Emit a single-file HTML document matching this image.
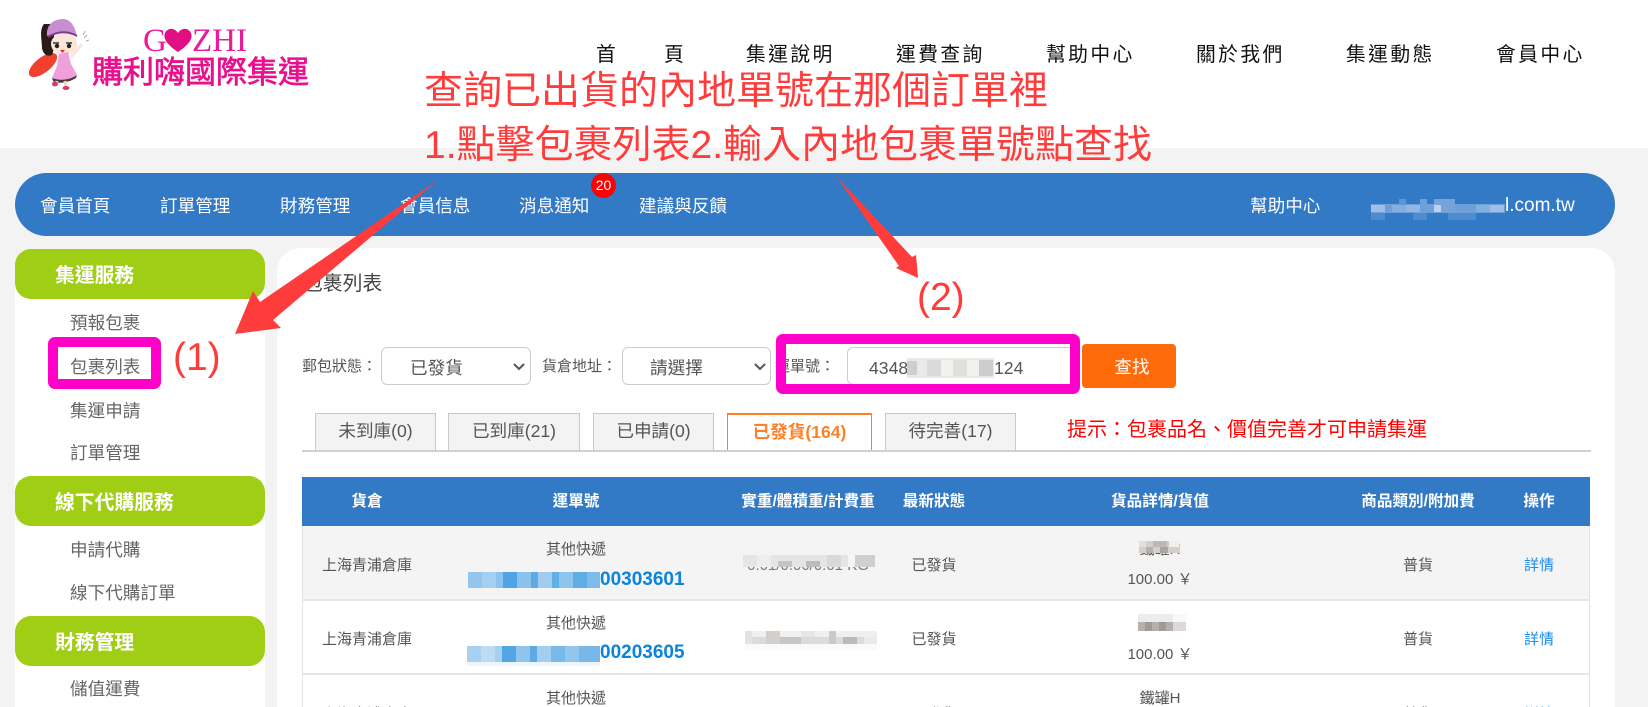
<!DOCTYPE html>
<html lang="zh-Hant"><head><meta charset="utf-8"><title>包裹列表</title>
<style>
html,body{margin:0;padding:0;width:1648px;height:707px;overflow:hidden}
body{background:#f3f3f3;font-family:"Liberation Sans","Noto Sans CJK TC",sans-serif;color:#555}
#p{position:relative;width:1648px;height:707px;overflow:hidden;background:#f3f3f3}
div,span{box-sizing:border-box}
.a{position:absolute}
.t{position:absolute;line-height:30px;height:30px;white-space:nowrap}
.c{text-align:center;width:240px}
.nav{font-size:19.8px;letter-spacing:2.4px;color:#111}
.m{font-size:17.6px;color:#fff}
.h{left:15px;width:250px;height:50px;background:#9fce14;border-radius:16px}
.hh{font-size:19.8px;font-weight:700;color:#fff;left:55px}
.s{font-size:17.6px;color:#666;left:70px}
.tab{position:absolute;top:413px;height:38px;background:#f3f3f3;border:1px solid #c8c8c8;border-bottom:none;font-size:17.6px;line-height:35px;text-align:center;color:#555;white-space:nowrap}
.sel{position:absolute;top:347px;height:38px;background:#fff;border:1px solid #ccc;border-radius:6px}
.l{font-size:15px;color:#555}
.th{font-size:15.6px;font-weight:700;color:#fff}
.td{font-size:15px;color:#555}
.no{font-size:19px;font-weight:700;color:#0a84dc;left:600px}
.lnk{font-size:15px;color:#1a8ceb}
.red{color:#ff3c3c;font-size:39px;line-height:46px;height:46px;position:absolute;white-space:nowrap}
.pk{position:absolute;border-style:solid;border-color:#ff00c8;border-radius:7px}
</style></head><body><div id="p">

<!-- header -->
<div class="a" style="left:0;top:0;width:1648px;height:148px;background:#fff"></div>

<!-- logo girl -->
<svg class="a" style="left:0;top:0" width="320" height="100" viewBox="0 0 320 100">
<ellipse cx="43" cy="65" rx="17" ry="7.5" transform="rotate(-38 43 65)" fill="#f2402e"/>
<path d="M44 24 C39 30 42 40 42 48 C43 54 47 57 52 55 C56 46 54 30 52 24Z" fill="#2a1a18"/>
<ellipse cx="64" cy="44" rx="13" ry="11" fill="#fbe6d8"/>
<path d="M47 36 C46 24 54 19 64 19 C72 20 75 28 77 36 C68 31 57 32 47 36Z" fill="#c98ed0"/>
<path d="M48 37 C58 31 68 31 77 36" stroke="#7d3f8c" stroke-width="2" fill="none"/>
<path d="M53 43 h6 M66 43 h6" stroke="#333" stroke-width="1.5"/>
<circle cx="57" cy="46" r="2.2" fill="#222"/><circle cx="69" cy="46" r="2.2" fill="#222"/>
<path d="M60 50h5l-2.5 3z" fill="#d03040"/>
<path d="M71 57 L82 44" stroke="#fbe6d8" stroke-width="3"/>
<path d="M84 38 l3 -3 M83 35 l2 -4 M86 41 l3 -1" stroke="#aaa" stroke-width="1"/>
<path d="M59 54 L68 52 L71 64 L77 75 C70 80 60 81 52 78 L57 66Z" fill="#efa0da"/>
<path d="M52 78 C60 81 70 80 77 75 L76 78 C68 83 58 84 53 81Z" fill="#4a3a3a"/>
<path d="M57 81 L56 85 M65 81 L66 88" stroke="#f5d5c5" stroke-width="3"/>
<ellipse cx="55" cy="84" rx="3" ry="2.5" fill="#d83a70"/><ellipse cx="66" cy="88" rx="3.5" ry="2" fill="#d83a70"/>
<path d="M178 52 C166 44 163 38 165 33 C168 27 175 28 178 33 C181 28 188 27 191 33 C193 38 190 44 178 52Z" fill="#e20f84"/>
</svg>
<div class="t" style="left:143px;top:26px;font:33px/30px 'Liberation Serif',serif;color:#ea1a98">G</div>
<div class="t" style="left:192px;top:26px;font:33px/30px 'Liberation Serif',serif;color:#ea1a98">ZHI</div>
<div class="t" style="left:92px;top:58px;font-size:31px;color:#e8108c;-webkit-text-stroke:.7px #e8108c">購利嗨國際集運</div>

<!-- top nav -->
<div class="t nav" style="left:596px;top:40px">首</div>
<div class="t nav" style="left:664px;top:40px">頁</div>
<div class="t nav" style="left:746px;top:40px">集運說明</div>
<div class="t nav" style="left:896px;top:40px">運費查詢</div>
<div class="t nav" style="left:1046px;top:40px">幫助中心</div>
<div class="t nav" style="left:1196px;top:40px">關於我們</div>
<div class="t nav" style="left:1346px;top:40px">集運動態</div>
<div class="t nav" style="left:1496px;top:40px">會員中心</div>

<!-- blue nav -->
<div class="a" style="left:15px;top:173px;width:1600px;height:63px;background:#337ac6;border-radius:31.5px"></div>
<div class="t m" style="left:40px;top:191px">會員首頁</div>
<div class="t m" style="left:160px;top:191px">訂單管理</div>
<div class="t m" style="left:280px;top:191px">財務管理</div>
<div class="t m" style="left:400px;top:191px">會員信息</div>
<div class="t m" style="left:519px;top:191px">消息通知</div>
<div class="t m" style="left:639px;top:191px">建議與反饋</div>
<div class="a" style="left:591px;top:173px;width:25px;height:25px;border-radius:50%;background:#f00;color:#fff;font-size:14px;line-height:25px;text-align:center">20</div>
<div class="t m" style="left:1250px;top:191px">幫助中心</div>
<div class="t m" style="left:1505px;top:191px;font-size:19px">l.com.tw</div>
<svg class="a" style="left:1371px;top:198px" width="134" height="22">
<rect y="6" width="134" height="9" fill="#6f9fd8"/>
<rect x="0" y="7" width="14" height="7" fill="#a0bfe6"/><rect x="14" y="7" width="14" height="7" fill="#6b9fd8"/><rect x="21" y="7" width="14" height="7" fill="#86aee0"/><rect x="28" y="1" width="7" height="6" fill="#5f95d2"/><rect x="35" y="7" width="14" height="7" fill="#93b6e2"/><rect x="49" y="1" width="7" height="6" fill="#6d9fd8"/><rect x="63" y="7" width="7" height="7" fill="#bcd2ec"/><rect x="63" y="1" width="7" height="6" fill="#76a3da"/><rect x="70" y="1" width="14" height="13" fill="#76a3da"/><rect x="105" y="7" width="14" height="7" fill="#7fb3de"/><rect x="119" y="7" width="14" height="7" fill="#9fbde6"/>
<rect x="0" y="15" width="14" height="7" fill="#4f8ccf"/><rect x="42" y="15" width="14" height="7" fill="#4f8ccf"/><rect x="77" y="15" width="28" height="7" fill="#4f8ccf"/>
</svg>

<!-- sidebar -->
<div class="a" style="left:15px;top:280px;width:250px;height:427px;background:#fff"></div>
<div class="a h" style="top:249px"></div>
<div class="t hh" style="top:261px">集運服務</div>
<div class="t s" style="top:308px">預報包裹</div>
<div class="t s" style="top:352px">包裹列表</div>
<div class="t s" style="top:396px">集運申請</div>
<div class="t s" style="top:438px">訂單管理</div>
<div class="a h" style="top:476px"></div>
<div class="t hh" style="top:488px">線下代購服務</div>
<div class="t s" style="top:535px">申請代購</div>
<div class="t s" style="top:578px">線下代購訂單</div>
<div class="a h" style="top:616px"></div>
<div class="t hh" style="top:628px">財務管理</div>
<div class="t s" style="top:674px">儲值運費</div>

<!-- content panel -->
<div class="a" style="left:277px;top:248px;width:1338px;height:459px;background:#fff;border-radius:24px 24px 0 0"></div>
<div class="t" style="left:303px;top:269px;font-size:19.8px;color:#444">包裹列表</div>

<!-- filters -->
<div class="t l" style="left:302px;top:352px">郵包狀態：</div>
<div class="sel" style="left:381px;width:150px"></div>
<div class="t" style="left:410px;top:353px;font-size:17.6px">已發貨</div>
<div class="t l" style="left:542px;top:352px">貨倉地址：</div>
<div class="sel" style="left:622px;width:149px"></div>
<div class="t" style="left:650px;top:353px;font-size:17.6px">請選擇</div>
<svg class="a" style="left:513px;top:362px" width="12" height="10"><path d="M1 2 L6 7 L11 2" fill="none" stroke="#555" stroke-width="2"/></svg>
<svg class="a" style="left:754px;top:362px" width="12" height="10"><path d="M1 2 L6 7 L11 2" fill="none" stroke="#555" stroke-width="2"/></svg>
<div class="t l" style="left:775px;top:352px">運單號：</div>
<div class="sel" style="left:847px;width:230px"></div>
<div class="t" style="left:869px;top:353px;font-size:17.6px">4348</div>
<div class="t" style="left:994px;top:353px;font-size:17.6px">124</div>
<svg class="a" style="left:907px;top:358px" width="87" height="20">
<rect width="87" height="20" fill="#e9e9e7"/><rect x="0" y="3" width="10" height="14" fill="#cfcfcf"/><rect x="20" y="2" width="14" height="16" fill="#dadada"/><rect x="34" y="2" width="12" height="16" fill="#f2f1ec"/><rect x="46" y="2" width="14" height="16" fill="#e0e0e0"/><rect x="60" y="2" width="12" height="16" fill="#f3f1ec"/><rect x="72" y="2" width="14" height="16" fill="#cdcdcd"/>
</svg>
<div class="a" style="left:1082px;top:344px;width:94px;height:44px;padding-left:6px;padding-top:1px;background:#ff6a0a;border-radius:4px;color:#fff;font-size:17.6px;line-height:44px;text-align:center">查找</div>

<!-- tabs -->
<div class="tab" style="left:315px;width:121px">未到庫(0)</div>
<div class="tab" style="left:448px;width:132px">已到庫(21)</div>
<div class="tab" style="left:593px;width:121px">已申請(0)</div>
<div class="tab" style="left:727px;width:145px;background:#fff;border-color:#ff7f27;border-top-width:2px;color:#ff7f27;font-weight:700">已發貨(164)</div>
<div class="tab" style="left:885px;width:131px">待完善(17)</div>
<div class="a" style="left:302px;top:450px;width:1289px;height:2px;background:#d0d0d0"></div>
<div class="t" style="left:1067px;top:415px;font-size:20px;color:#f00">提示：包裹品名、價值完善才可申請集運</div>

<!-- table -->
<div class="a" style="left:302px;top:477px;width:1288px;height:49px;background:#337ac6"></div>
<div class="a" style="left:302px;top:526px;width:1288px;height:75px;background:#f4f4f4;border-bottom:2px solid #e6e6e6"></div>
<div class="a" style="left:302px;top:601px;width:1288px;height:74px;background:#fff;border-bottom:2px solid #e6e6e6"></div>
<div class="a" style="left:302px;top:526px;width:1px;height:181px;background:#e2e2e2"></div>
<div class="a" style="left:1589px;top:526px;width:1px;height:181px;background:#e2e2e2"></div>

<div class="t c th" style="left:247px;top:487px">貨倉</div>
<div class="t c th" style="left:456px;top:487px">運單號</div>
<div class="t c th" style="left:688px;top:487px">實重/體積重/計費重</div>
<div class="t c th" style="left:814px;top:487px">最新狀態</div>
<div class="t c th" style="left:1040px;top:487px">貨品詳情/貨值</div>
<div class="t c th" style="left:1298px;top:487px">商品類別/附加費</div>
<div class="t c th" style="left:1419px;top:487px">操作</div>

<!-- row 1 -->
<div class="t c td" style="left:247px;top:551px">上海青浦倉庫</div>
<div class="t c td" style="left:456px;top:535px">其他快遞</div>
<svg class="a" style="left:468px;top:572px" width="132" height="16">
<rect width="132" height="16" fill="#80bdea"/><rect x="0" width="14" height="16" fill="#92c6ee"/><rect x="14" width="14" height="16" fill="#a5cff0"/><rect x="28" width="14" height="16" fill="#6db4e8"/><rect x="28" width="7" height="16" fill="#8cc3ec"/><rect x="35" width="14" height="16" fill="#4ea4e4"/><rect x="49" width="14" height="16" fill="#8ac2ec"/><rect x="63" width="7" height="16" fill="#5eaae6"/><rect x="70" width="14" height="16" fill="#a0ccef"/><rect x="84" width="7" height="16" fill="#62aee6"/><rect x="91" width="14" height="16" fill="#8fc4ed"/><rect x="105" width="14" height="16" fill="#5fade7"/><rect x="119" width="13" height="16" fill="#7fbbea"/>
</svg>
<div class="t no" style="top:565px">00303601</div>
<div class="t c td" style="left:688px;top:551px;color:#777">0.01/0.00/0.01 KG</div>
<svg class="a" style="left:743px;top:555px" width="132" height="12">
<rect width="132" height="12" fill="#e6e5e4"/><rect x="14" width="14" height="12" fill="#efeeec"/><rect x="35" y="6" width="14" height="6" fill="#c4c2c2"/><rect x="63" y="6" width="14" height="6" fill="#bcbaba"/><rect x="84" width="14" height="12" fill="#dbd9d8"/><rect x="105" width="7" height="12" fill="#f5f5f5"/><rect x="112" width="20" height="12" fill="#d0cece"/>
</svg>
<div class="t c td" style="left:814px;top:551px">已發貨</div>
<div class="t c td" style="left:1040px;top:535px">鐵罐H</div>
<svg class="a" style="left:1139px;top:541px" width="40" height="12">
<rect width="40" height="12" fill="#d2cfcc"/><rect width="7" height="6" fill="#e2dfdd"/><rect x="14" width="14" height="6" fill="#bdb8b5"/><rect x="21" y="6" width="8" height="6" fill="#aaa5a2"/><rect x="30" width="10" height="6" fill="#f2f0e8"/><rect x="7" y="6" width="7" height="6" fill="#b5b0ad"/>
</svg>
<div class="t c td" style="left:1040px;top:565px">100.00 ￥</div>
<div class="t c td" style="left:1298px;top:551px">普貨</div>
<div class="t c lnk" style="left:1419px;top:551px">詳情</div>

<!-- row 2 -->
<div class="t c td" style="left:247px;top:625px">上海青浦倉庫</div>
<div class="t c td" style="left:456px;top:609px">其他快遞</div>
<svg class="a" style="left:467px;top:646px" width="133" height="20">
<rect width="133" height="16" fill="#8cc3ec"/><rect x="0" width="14" height="16" fill="#a8d1f1"/><rect x="14" width="14" height="16" fill="#bcdcf4"/><rect x="28" width="14" height="16" fill="#93c7ee"/><rect x="28" width="7" height="16" fill="#a5d0f0"/><rect x="35" width="14" height="16" fill="#52a6e4"/><rect x="49" width="14" height="16" fill="#8ec4ed"/><rect x="63" width="7" height="16" fill="#5eaae6"/><rect x="70" width="14" height="16" fill="#a2ceef"/><rect x="84" width="14" height="16" fill="#78b9ea"/><rect x="98" width="14" height="16" fill="#92c6ee"/><rect x="112" width="21" height="16" fill="#78b7e9"/><rect y="16" width="133" height="4" fill="#eef6fc"/>
</svg>
<div class="t no" style="top:638px">00203605</div>
<svg class="a" style="left:745px;top:631px" width="132" height="19">
<rect width="132" height="19" fill="#f1f0ef"/><rect y="6" width="132" height="7" fill="#dddbda"/><rect x="0" width="7" height="13" fill="#e5e2df"/><rect x="21" y="0" width="14" height="13" fill="#d2cfcd"/><rect x="35" y="6" width="21" height="7" fill="#c8c5c4"/><rect x="56" width="14" height="6" fill="#e7e6e4"/><rect x="84" width="7" height="13" fill="#ccc9c8"/><rect x="98" y="6" width="14" height="7" fill="#bdbaba"/><rect x="119" y="6" width="13" height="7" fill="#e8eaef"/><rect y="13" width="132" height="6" fill="#fafafa"/>
</svg>
<div class="t c td" style="left:814px;top:625px">已發貨</div>
<svg class="a" style="left:1138px;top:614px" width="48" height="17">
<rect width="48" height="8" fill="#ececec"/><rect y="8" width="48" height="9" fill="#b5b0ae"/><rect x="7" y="8" width="7" height="9" fill="#a09a97"/><rect x="21" y="8" width="7" height="9" fill="#a09a97"/><rect x="35" y="8" width="13" height="9" fill="#dcdad9"/><rect x="35" width="13" height="8" fill="#f8f8f8"/>
</svg>
<div class="t c td" style="left:1040px;top:640px">100.00 ￥</div>
<div class="t c td" style="left:1298px;top:625px">普貨</div>
<div class="t c lnk" style="left:1419px;top:625px">詳情</div>

<!-- row 3 -->
<div class="t c td" style="left:247px;top:700px">上海青浦倉庫</div>
<div class="t c td" style="left:456px;top:684px">其他快遞</div>
<div class="t c td" style="left:814px;top:700px">已發貨</div>
<div class="t c td" style="left:1040px;top:684px">鐵罐H</div>
<div class="t c td" style="left:1298px;top:700px">普貨</div>
<div class="t c lnk" style="left:1419px;top:700px">詳情</div>

<!-- annotations -->
<div class="pk" style="left:48px;top:337px;width:113px;height:52px;border-width:10px"></div>
<div class="pk" style="left:776px;top:334px;width:304px;height:60px;border-width:10px"></div>
<div class="red" style="left:424px;top:69px">查詢已出貨的內地單號在那個訂單裡</div>
<div class="red" style="left:424px;top:123px">1.點擊包裹列表2.輸入內地包裹單號點查找</div>
<div class="red" style="left:173px;top:335px">(1)</div>
<div class="red" style="left:917px;top:275px">(2)</div>
<svg class="a" style="left:0;top:0" width="1648" height="707">
<polygon points="438,180 273,320 281,328 235,334 253,291 260,302" fill="#ff3c3c"/>
<polygon points="836,176 912,257 916,255 918,278 896,268 899,266" fill="#ff3c3c"/>
</svg>
</div></body></html>
